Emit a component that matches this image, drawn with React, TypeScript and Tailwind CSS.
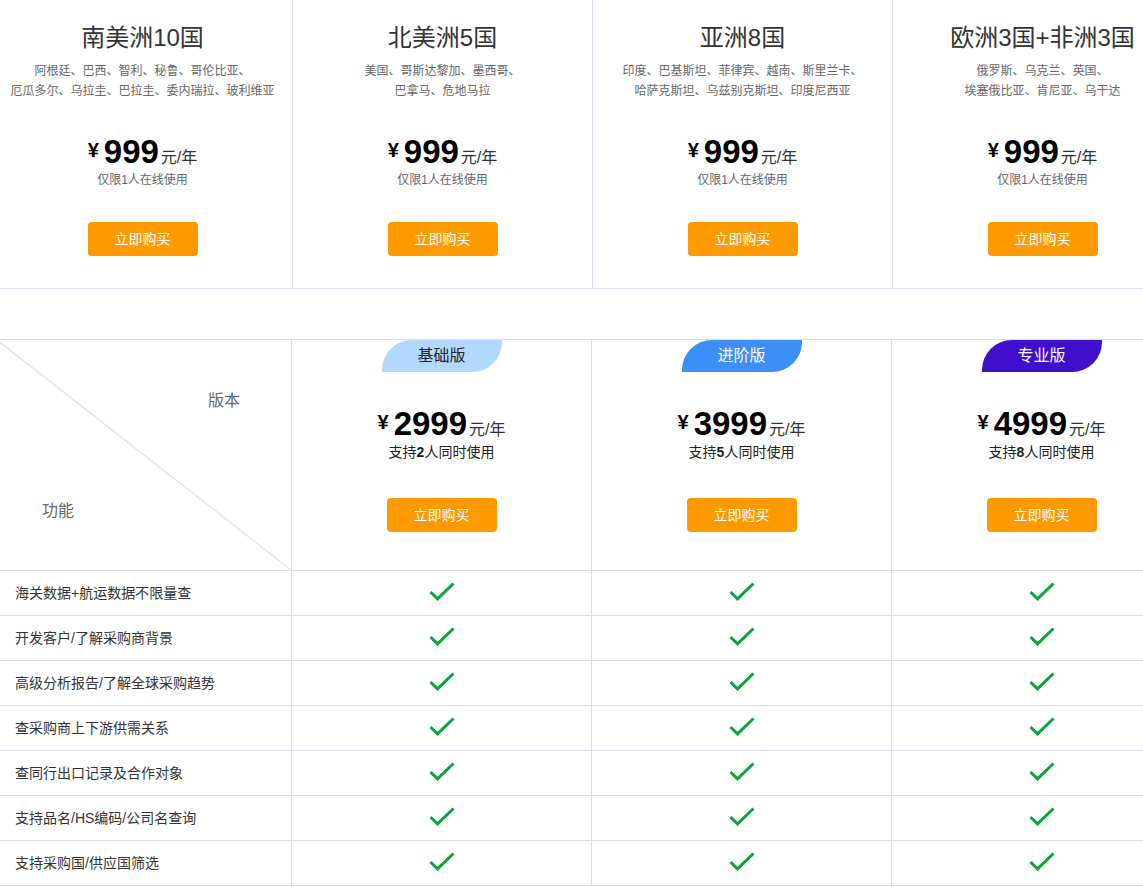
import React from "react";

const regions = [
  { title: "南美洲10国", lines: ["阿根廷、巴西、智利、秘鲁、哥伦比亚、", "厄瓜多尔、乌拉圭、巴拉圭、委内瑞拉、玻利维亚"] },
  { title: "北美洲5国", lines: ["美国、哥斯达黎加、墨西哥、", "巴拿马、危地马拉"] },
  { title: "亚洲8国", lines: ["印度、巴基斯坦、菲律宾、越南、斯里兰卡、", "哈萨克斯坦、乌兹别克斯坦、印度尼西亚"] },
  { title: "欧洲3国+非洲3国", lines: ["俄罗斯、乌克兰、英国、", "埃塞俄比亚、肯尼亚、乌干达"] },
];

const plans = [
  { name: "基础版", badge: "bg-[#b3d8ff] text-[#222]", price: "2999", users: "2" },
  { name: "进阶版", badge: "bg-[#3d8ef7] text-white", price: "3999", users: "5" },
  { name: "专业版", badge: "bg-[#3f0fcb] text-white", price: "4999", users: "8" },
];

const features = [
  "海关数据+航运数据不限量查",
  "开发客户/了解采购商背景",
  "高级分析报告/了解全球采购趋势",
  "查采购商上下游供需关系",
  "查同行出口记录及合作对象",
  "支持品名/HS编码/公司名查询",
  "支持采购国/供应国筛选",
];

function Price({ value }: { value: string }) {
  return (
    <div className="flex h-[36px] items-baseline justify-center leading-[36px]">
      <span className="relative -top-[6px] mr-[5px] text-[20px] font-bold text-black">¥</span>
      <span className="text-[33px] font-bold text-black">{value}</span>
      <span className="ml-[2px] text-[16px] text-[#333]">元/年</span>
    </div>
  );
}

function BuyButton() {
  return (
    <button className="flex h-[34px] w-[110px] items-center justify-center rounded-[4px] bg-[#ff9900] text-[14px] text-white">
      立即购买
    </button>
  );
}

function Check() {
  return (
    <svg width="26" height="20" viewBox="0 0 26 20" fill="none">
      <polyline points="1.5,10 8.5,16.8 24.5,1.5" stroke="#0ca43a" strokeWidth="3" strokeLinejoin="miter" />
    </svg>
  );
}

export default function App() {
  return (
    <div
      className="w-full overflow-hidden bg-white"
      style={{ fontFamily: '"Liberation Sans", "Noto Sans CJK SC", sans-serif' }}
    >
      {/* Region packages */}
      <div className="border-b border-[#dcdde8]">
        <div className="ml-[-7px] flex w-[1200px]">
          {regions.map((r) => (
            <div
              key={r.title}
              className="flex w-[300px] shrink-0 flex-col items-center border-r border-[#dcdde8] pt-[22px] pb-[32px]"
            >
              <div className="h-[32px] text-[24px] leading-[32px] text-[#333]">{r.title}</div>
              <div className="mt-[7px] text-center text-[12px] leading-[20px] text-[#666]">
                {r.lines[0]}
                <br />
                {r.lines[1]}
              </div>
              <div className="mt-[33px]">
                <Price value="999" />
              </div>
              <div className="text-[12px] leading-[20px] text-[#666]">仅限1人在线使用</div>
              <div className="mt-[32px]">
                <BuyButton />
              </div>
            </div>
          ))}
        </div>
      </div>

      <div className="h-[50px]" />

      {/* Plan table */}
      <div className="border-t border-[#dcdde8]">
        <div className="flex w-[1200px]">
          {/* header row */}
          <div className="flex h-[231px] w-full border-b border-[#dcdde8]">
            <div className="relative flex w-[292px] shrink-0 flex-col justify-between border-r border-[#dcdde8] pt-[49px] pb-[47px]">
              <svg className="absolute inset-0 h-full w-[291px]" preserveAspectRatio="none" viewBox="0 0 100 100">
                <line x1="0" y1="1" x2="100" y2="100" stroke="#e2e3ee" strokeWidth="1.3" vectorEffect="non-scaling-stroke" />
              </svg>
              <span className="relative self-end pr-[51px] text-[16px] leading-[24px] text-[#666]">版本</span>
              <span className="relative self-start pl-[42px] text-[16px] leading-[24px] text-[#666]">功能</span>
            </div>
            {plans.map((p) => (
              <div
                key={p.name}
                className="flex w-[300px] shrink-0 flex-col items-center border-r border-[#dcdde8]"
              >
                <div
                  className={`flex h-[32px] w-[120px] items-center justify-center rounded-[30px_0] text-[16px] ${p.badge}`}
                >
                  {p.name}
                </div>
                <div className="mt-[34px]">
                  <Price value={p.price} />
                </div>
                <div className="text-[14px] leading-[20px] text-[#222]">
                  支持<span className="font-bold">{p.users}</span>人同时使用
                </div>
                <div className="mt-[36px]">
                  <BuyButton />
                </div>
              </div>
            ))}
          </div>
        </div>
        {features.map((f) => (
          <div key={f} className="flex h-[45px] w-[1200px] border-b border-[#dcdde8]">
            <div className="flex w-[292px] shrink-0 items-center border-r border-[#dcdde8] pl-[15px] text-[14px] text-[#333]">
              {f}
            </div>
            {plans.map((p) => (
              <div
                key={p.name}
                className="flex w-[300px] shrink-0 items-center justify-center border-r border-[#dcdde8] pb-[3px]"
              >
                <Check />
              </div>
            ))}
          </div>
        ))}
      </div>
    </div>
  );
}
